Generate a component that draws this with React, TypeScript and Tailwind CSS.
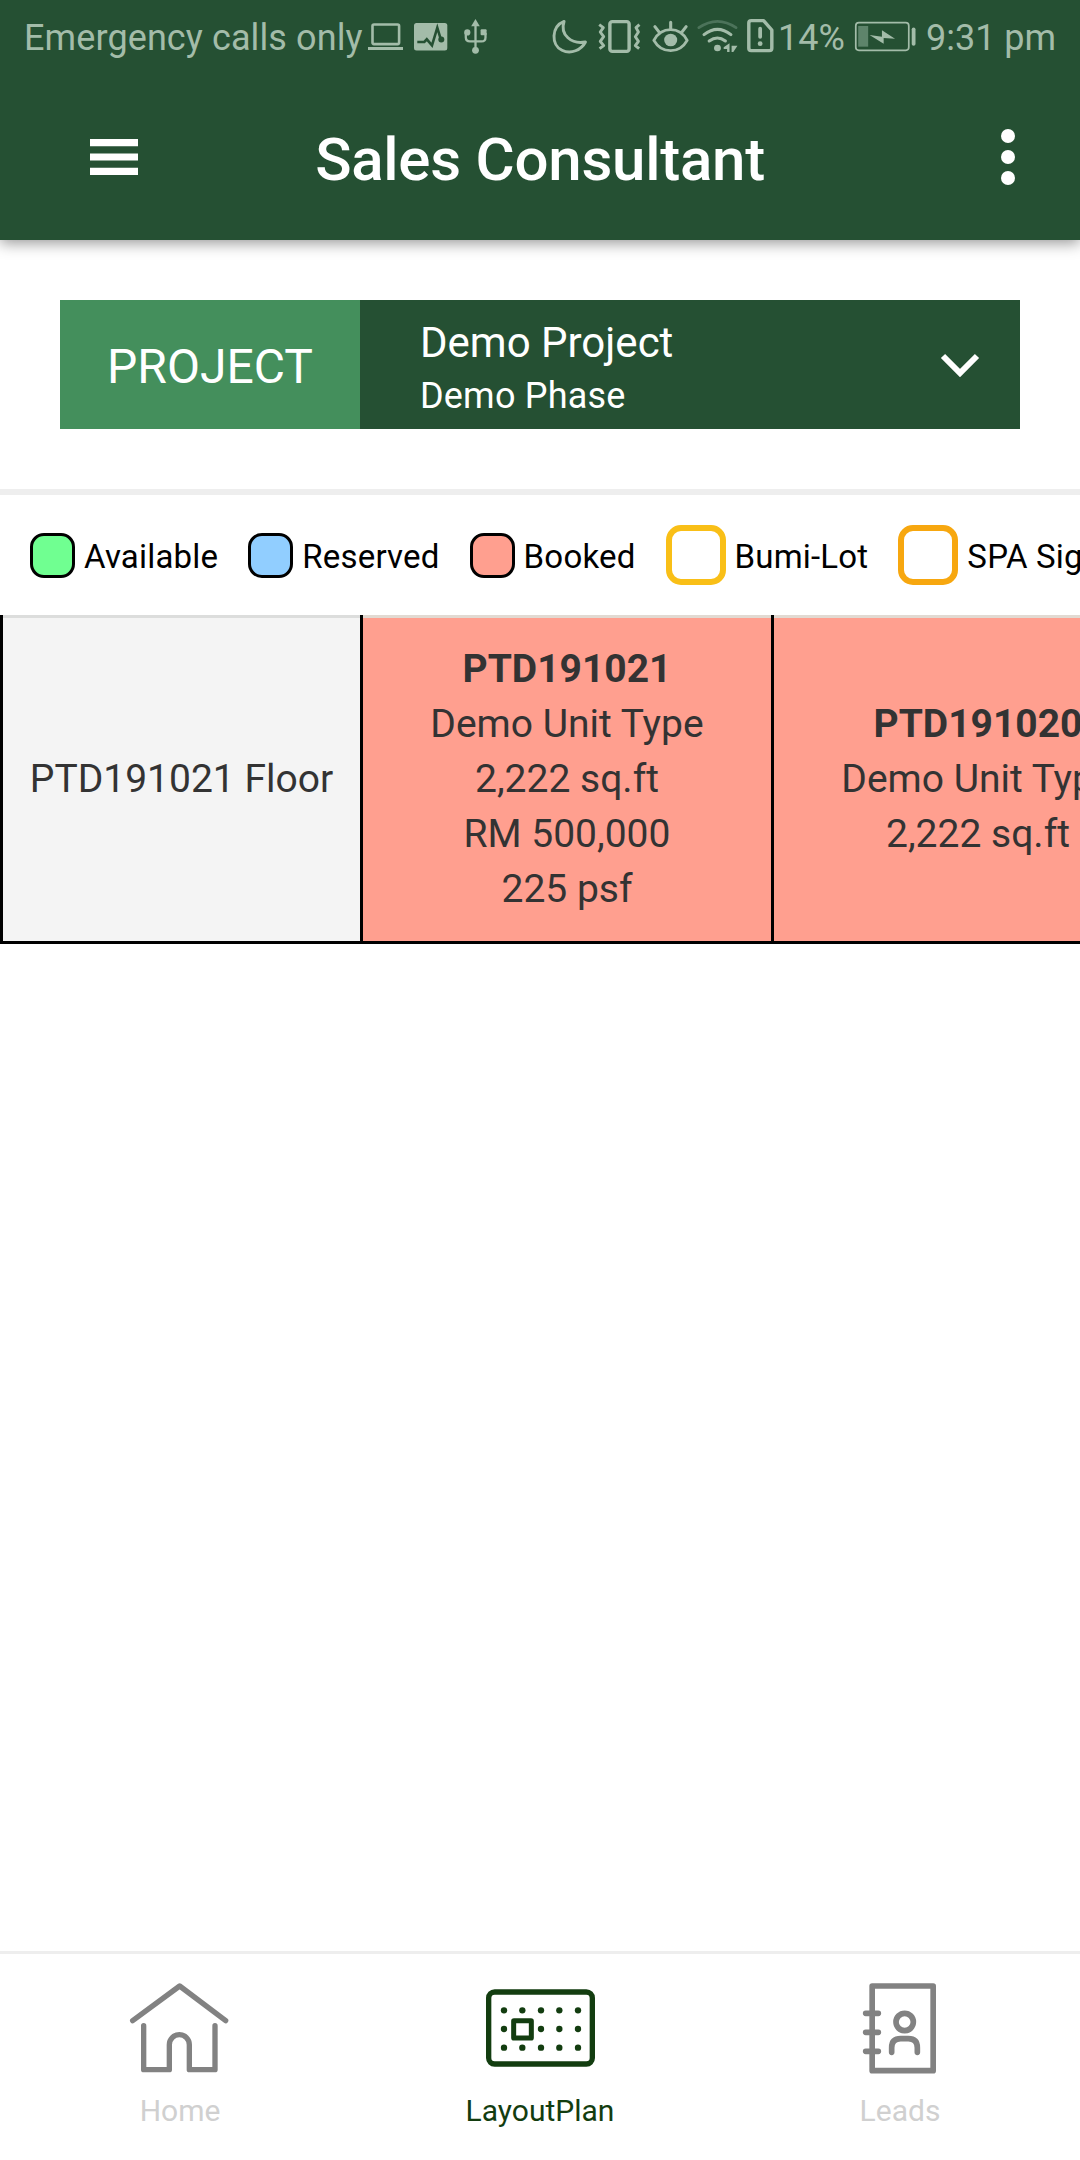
import type { ReactNode } from "react";

type GlyphProps = { className: string; viewBox: string; children: ReactNode };

function Glyph({ className, viewBox, children }: GlyphProps) {
  return (
    <svg className={`block shrink-0 ${className}`} viewBox={viewBox} preserveAspectRatio="none" fill="none">
      {children}
    </svg>
  );
}

function StatusBar() {
  return (
    <div className="flex h-20 justify-between pl-6 text-[36px] leading-[77px] whitespace-nowrap text-[#a3bca9]">
      <div className="flex">
        <span className="w-[342px] tracking-[0.1px]">Emergency calls only</span>
        <Glyph className="h-20 w-[134px]" viewBox="366 0 134 80">
          <g stroke="currentColor" strokeWidth="2.6">
            <rect x="372.5" y="24.5" width="26.6" height="19.6" rx="1.5" />
            <path d="M368 48.6h35" strokeWidth="3" />
          </g>
          <rect x="414" y="23" width="33.3" height="27.4" rx="2.5" fill="currentColor" />
          <path d="M417.3 42h7l2.5-2.7 5.2 6 5.3-17.6 3.5 11.6" stroke="#255033" strokeWidth="2.6" />
          <circle cx="441.3" cy="39.5" r="3" fill="#255033" />
          <path d="M475.5 24v26M465.8 33v4.2q0 4.2 4.2 4.2h11.5q4 0 4-4V33" stroke="currentColor" strokeWidth="2.3" />
          <path d="M475.5 19l4.3 7.3h-8.6z" fill="currentColor" />
          <circle cx="467.3" cy="32.4" r="3.1" fill="currentColor" />
          <rect x="480.6" y="29.3" width="6" height="6" rx="1" fill="currentColor" />
          <circle cx="475.5" cy="50.3" r="3.4" fill="currentColor" />
        </Glyph>
      </div>
      <div className="flex">
        <Glyph className="h-20 w-[41px]" viewBox="30 0 119 240">
          <path
            d="M68 64C30 80 30 135 62 151C88 164 118 150 130 126C90 134 55 105 68 64Z"
            stroke="currentColor"
            strokeWidth="8.5"
            strokeLinejoin="round"
          />
        </Glyph>
        <Glyph className="h-20 w-[55px]" viewBox="149 0 160 240">
          <rect x="201" y="65" width="56" height="89" rx="7" stroke="currentColor" strokeWidth="10" />
          <path
            d="M170 74l12 9-9 13 10 14-10 14 10 13-12 9M287 74l-10 9 7 13-9 14 9 14-9 13 11 9"
            stroke="currentColor"
            strokeWidth="8.5"
            strokeLinejoin="round"
          />
        </Glyph>
        <Glyph className="h-20 w-[46px]" viewBox="309 0 134 240">
          <path
            d="M329 121Q346 89 378 89Q409 89 426 121Q409 152 378 152Q346 152 329 121Z"
            stroke="currentColor"
            strokeWidth="8.500"
            strokeLinejoin="round"
          />
          <circle cx="378" cy="120" r="19" fill="currentColor" />
          <path d="M378 67v18M332 80l13 17M423 80l-13 17" stroke="currentColor" strokeWidth="9" strokeLinecap="round" />
        </Glyph>
        <Glyph className="h-20 w-[51px]" viewBox="443 0 148 240">
          <path d="M460 83Q514 45 568 83" stroke="#4c735a" strokeWidth="8" strokeLinecap="round" />
          <path d="M475 104Q514 72 553 104M490 123Q514 105 537 123" stroke="currentColor" strokeWidth="9" strokeLinecap="round" />
          <circle cx="514" cy="144" r="10" fill="currentColor" />
          <path d="M549 130v26h-7v-9h-10v-5zM555 137h17l-12 19h-5z" fill="currentColor" />
        </Glyph>
        <Glyph className="h-20 w-[34px]" viewBox="591 0 99 240">
          <path
            d="M612 62h36l24 28v55q0 7-7 7h-53q-7 0-7-7V69q0-7 7-7z"
            stroke="currentColor"
            strokeWidth="10"
            strokeLinejoin="round"
          />
          <path d="M638 86v25" stroke="currentColor" strokeWidth="11" strokeLinecap="round" />
          <circle cx="638" cy="131" r="7" fill="currentColor" />
        </Glyph>
        <span className="w-[74px]">14%</span>
        <Glyph className="h-20 w-[74px]" viewBox="905 0 215 240">
          <rect x="916" y="68" width="154" height="83" rx="9" stroke="currentColor" strokeWidth="5" />
          <path d="M923 78h29v62h-29z" fill="#5e846b" />
          <path d="M956 105l36 5V91l38 25-33-2v17z" fill="currentColor" />
          <path d="M1084 88v44" stroke="currentColor" strokeWidth="11" strokeLinecap="round" />
        </Glyph>
        <span className="w-[154px]">9:31 pm</span>
      </div>
    </div>
  );
}

function Header() {
  return (
    <header className="relative z-10 flex h-60 flex-col bg-[#255033] shadow-[0_3px_14px_rgba(0,0,0,0.42)]">
      <StatusBar />
      <div className="grid h-40 grid-cols-[1fr_auto_1fr] items-center pb-[6px] text-white">
        <Glyph className="ml-[90px] h-9 w-12" viewBox="0 0 48 36">
          <path d="M0 0h48v7.2H0zM0 14.4h48v7.2H0zM0 28.8h48V36H0z" fill="currentColor" />
        </Glyph>
        <h1 className="pt-[6px] text-[60px] leading-none font-medium tracking-[-0.25px]">Sales Consultant</h1>
        <Glyph className="mr-[65px] h-14 w-3.5 justify-self-end" viewBox="0 0 14 56">
          <g fill="currentColor">
            <circle cx="7" cy="7" r="7" />
            <circle cx="7" cy="28" r="7" />
            <circle cx="7" cy="49" r="7" />
          </g>
        </Glyph>
      </div>
    </header>
  );
}

function ProjectPicker() {
  return (
    <section className="border-b-6 border-[#eeeeee] px-[60px] py-[60px]">
      <div className="flex h-[129px] bg-[#255033] text-white">
        <div className="flex w-[300px] items-center justify-center bg-[#448f5c] pt-1 text-[48px]">PROJECT</div>
        <div className="flex flex-1 items-center justify-between pr-10 pl-[60px]">
          <div className="flex flex-col pt-[6px]">
            <span className="text-[42px] leading-[56px]">Demo Project</span>
            <span className="text-[36px] leading-[50px] tracking-[0.2px]">Demo Phase</span>
          </div>
          <Glyph className="h-6 w-[40px]" viewBox="0 0 40 24">
            <path d="M3 3L20 20 37 3" stroke="currentColor" strokeWidth="6" />
          </Glyph>
        </div>
      </div>
    </section>
  );
}

const legend = [
  { label: "Available", swatch: "size-[45px] rounded-[14px] border-3 border-black bg-[#70ff91]" },
  { label: "Reserved", swatch: "size-[45px] rounded-[14px] border-3 border-black bg-[#91ceff]" },
  { label: "Booked", swatch: "size-[45px] rounded-[14px] border-3 border-black bg-[#ff9f8f]" },
  { label: "Bumi-Lot", swatch: "size-[60px] rounded-[15px] border-6 border-[#f9bf17]" },
  { label: "SPA Signed", swatch: "size-[60px] rounded-[15px] border-6 border-[#f7a70f]" },
];

function Legend() {
  return (
    <ul className="flex h-[120px] gap-[30px] overflow-hidden pl-[30px] text-[33px] tracking-[0.2px] whitespace-nowrap text-black">
      {legend.map(({ label, swatch }) => (
        <li key={label} className="flex shrink-0 items-center gap-[9px]">
          <span className={swatch} />
          <span className="pt-[3px]">{label}</span>
        </li>
      ))}
    </ul>
  );
}

const units = [
  { lot: "PTD191021", details: ["Demo Unit Type", "2,222 sq.ft", "RM 500,000", "225 psf"] },
  { lot: "PTD191020", details: ["Demo Unit Type", "2,222 sq.ft"] },
];

function FloorTable() {
  return (
    <div className="overflow-hidden">
      <div className="flex h-[329px] w-max border-b-3 border-l-3 border-black text-center text-[39px] leading-[55px] text-[#333333]">
        <div className="flex w-[360px] items-center justify-center border-r-3 border-black bg-[#f4f4f4] pt-[2px] shadow-[inset_0_3px_#dcdddc]">
          PTD191021 Floor
        </div>
        {units.map(({ lot, details }) => (
          <div
            key={lot}
            className="flex w-[411px] flex-col justify-center border-r-3 border-black bg-[#ff9f8f] pt-[2px] shadow-[inset_0_3px_#e2dad2]"
          >
            <strong className="font-bold">{lot}</strong>
            {details.map((line) => (
              <span key={line}>{line}</span>
            ))}
          </div>
        ))}
      </div>
    </div>
  );
}

function HomeIcon() {
  return (
    <Glyph className="h-[108px] w-[120px]" viewBox="60 105 360 324">
      <g stroke="#828282" strokeWidth="16" strokeLinecap="round" strokeLinejoin="round">
        <path d="M98 242l141-104 138 104" />
        <path d="M131 257v132h77v-75a30 30 0 0 1 60 0v75h77V257" />
      </g>
    </Glyph>
  );
}

function LayoutIcon() {
  return (
    <Glyph className="h-[108px] w-[120px]" viewBox="90 105 360 324">
      <rect x="116" y="156" width="311" height="216" rx="18" stroke="#133d10" strokeWidth="16" />
      <rect x="191" y="242" width="53" height="52" rx="1" stroke="#133d10" strokeWidth="15" strokeLinejoin="round" />
      <g fill="#133d10">
        {[211, 267, 323].flatMap((cy) =>
          [162, 217, 273, 328, 384]
            .filter((cx) => cy !== 267 || cx !== 217)
            .map((cx) => <circle key={`${cx}-${cy}`} cx={cx} cy={cy} r="9.5" />),
        )}
      </g>
    </Glyph>
  );
}

function LeadsIcon() {
  return (
    <Glyph className="h-[108px] w-[120px]" viewBox="60 105 360 324">
      <g stroke="#828282" strokeWidth="17" strokeLinecap="round" strokeLinejoin="round">
        <rect x="156.5" y="138" width="183" height="254" />
        <path d="M137 220h38M137 277h38M137 334h38" />
        <circle cx="254" cy="246" r="26" />
        <path d="M215 337v-14q0-27 27-27h23q27 0 27 27v14" />
      </g>
    </Glyph>
  );
}

const tabs = [
  { label: "Home", icon: <HomeIcon />, color: "text-[#d0d0d0]" },
  { label: "LayoutPlan", icon: <LayoutIcon />, color: "text-[#133d10]" },
  { label: "Leads", icon: <LeadsIcon />, color: "text-[#d0d0d0]" },
];

function TabBar() {
  return (
    <nav className="mt-auto grid h-[209px] grid-cols-3 border-t-3 border-[#eeeeee]">
      {tabs.map(({ label, icon, color }) => (
        <div key={label} className="flex flex-col items-center pt-[21px]">
          {icon}
          <span className={`mt-2 text-[30px] leading-[40px] ${color}`}>{label}</span>
        </div>
      ))}
    </nav>
  );
}

export default function App() {
  return (
    <div className="flex h-[2160px] w-[1080px] flex-col overflow-hidden bg-white font-[Roboto,sans-serif]">
      <Header />
      <ProjectPicker />
      <Legend />
      <FloorTable />
      <TabBar />
    </div>
  );
}
